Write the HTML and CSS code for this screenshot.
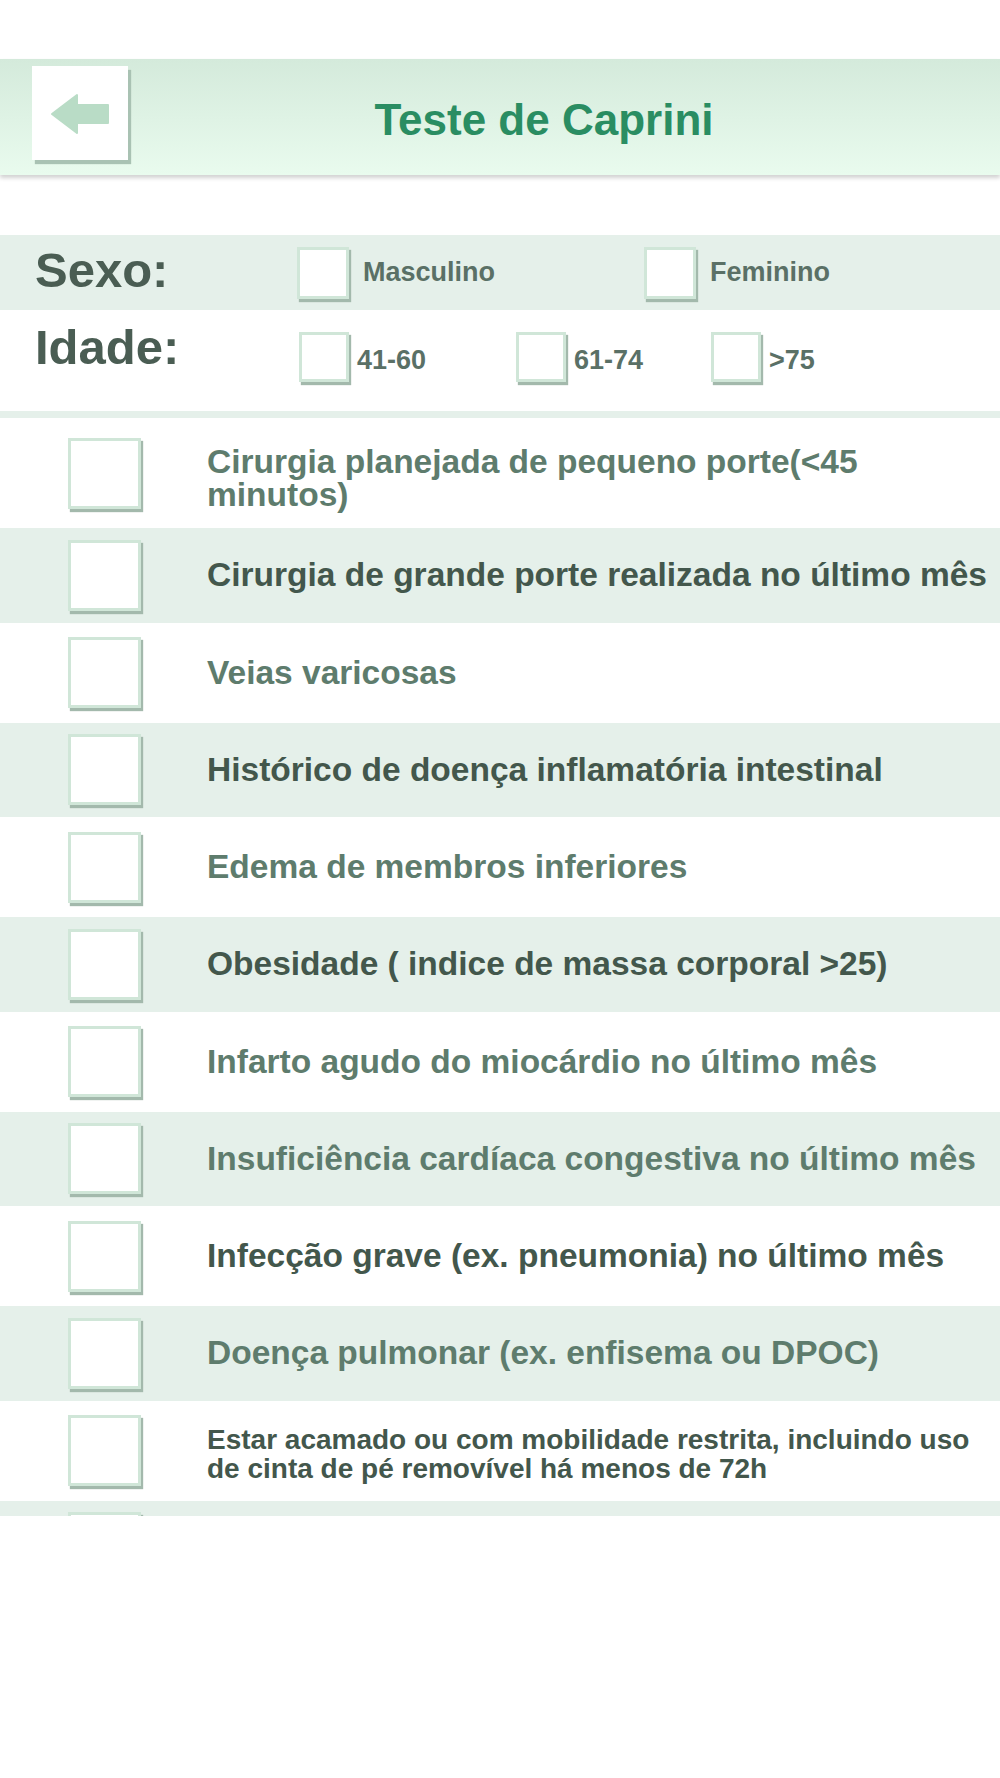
FILE: index.html
```html
<!DOCTYPE html>
<html lang="pt-BR">
<head>
    <meta charset="UTF-8">
    <meta name="viewport" content="width=device-width, initial-scale=1.0">
    <title>Teste de Caprini</title>
    <link rel="stylesheet" href="styles.css">
</head>
<body>
    <header class="topbar">
        <button class="back-btn" type="button">
            <svg width="96" height="94" viewBox="0 0 96 94">
                <path d="M20 48 L45 29 L45 39 L76 39 L76 57 L45 57 L45 67 Z" fill="#b9dcc6" stroke="#b9dcc6" stroke-width="2" stroke-linejoin="round"/>
            </svg>
        </button>
        <h1 class="title">Teste de Caprini</h1>
    </header>

    <section class="patient">
        <div class="field field-sexo">
            <span class="field-label">Sexo:</span>
            <label class="opt opt-sexo"><span class="box"></span>Masculino</label>
            <label class="opt opt-sexo"><span class="box"></span>Feminino</label>
        </div>
        <div class="field field-idade">
            <span class="field-label">Idade:</span>
            <label class="opt opt-age1"><span class="box"></span><span class="opt-text">41-60</span></label>
            <label class="opt opt-age2"><span class="box"></span><span class="opt-text">61-74</span></label>
            <label class="opt"><span class="box"></span><span class="opt-text">&gt;75</span></label>
        </div>
    </section>

    <div class="divider"></div>

    <ul class="risk-list">
        <li class="risk first"><span class="box box-lg"></span><span class="risk-text light">Cirurgia planejada de pequeno porte(&lt;45 minutos)</span></li>
        <li class="risk"><span class="box box-lg"></span><span class="risk-text">Cirurgia de grande porte realizada no último mês</span></li>
        <li class="risk"><span class="box box-lg"></span><span class="risk-text light">Veias varicosas</span></li>
        <li class="risk"><span class="box box-lg"></span><span class="risk-text">Histórico de doença inflamatória intestinal</span></li>
        <li class="risk"><span class="box box-lg"></span><span class="risk-text light">Edema de membros inferiores</span></li>
        <li class="risk"><span class="box box-lg"></span><span class="risk-text">Obesidade ( indice de massa corporal &gt;25)</span></li>
        <li class="risk"><span class="box box-lg"></span><span class="risk-text light">Infarto agudo do miocárdio no último mês</span></li>
        <li class="risk"><span class="box box-lg"></span><span class="risk-text light">Insuficiência cardíaca congestiva no último mês</span></li>
        <li class="risk"><span class="box box-lg"></span><span class="risk-text">Infecção grave (ex. pneumonia) no último mês</span></li>
        <li class="risk"><span class="box box-lg"></span><span class="risk-text light">Doença pulmonar (ex. enfisema ou DPOC)</span></li>
        <li class="risk"><span class="box box-lg"></span><span class="risk-text small">Estar acamado ou com mobilidade restrita, incluindo uso de cinta de pé removível há menos de 72h</span></li>
        <li class="risk"><span class="box box-lg"></span></li>
    </ul>
</body>
</html>
```

FILE: styles.css
```css
:root {
    --shade: #e5f0ea;
    --text-dark: #43574c;
    --text-light: #5e7c6d;
    --label: #4a5d53;
    --title: #2a8d62;
    --box-border: #d0e6d8;
    --box-shadow: #a3b9ac;
}

body {
    margin: 0;
    background: #fff;
    font-family: "Liberation Sans", Arial, sans-serif;
    font-weight: bold;
}

/* header */
.topbar {
    display: flex;
    align-items: flex-start;
    box-sizing: border-box;
    height: 116px;
    margin-top: 59px;
    padding: 7px 40px 0 32px;
    background: linear-gradient(to bottom, #d4eadb, #e9fbee);
    box-shadow: 0 3px 4px rgba(0, 0, 0, 0.18);
}

.back-btn {
    display: flex;
    width: 96px;
    height: 94px;
    padding: 0;
    border: none;
    background: #fff;
    box-shadow: 3px 4px 1px #a9c2b3;
    cursor: pointer;
}

.title {
    flex: 1;
    margin: 32px 0 0;
    font-size: 44px;
    line-height: 44px;
    text-align: center;
    color: var(--title);
}

/* sexo / idade */
.patient {
    margin-top: 60px;
}

.field {
    display: flex;
    box-sizing: border-box;
    padding-left: 35px;
}

.field-sexo {
    height: 75px;
    align-items: center;
    background: var(--shade);
}

.field-idade {
    height: 101px;
    align-items: flex-start;
    padding-top: 13px;
}

.field-label {
    font-size: 49px;
    line-height: 49px;
    color: var(--label);
}

.field-sexo .field-label {
    width: 262px;
    margin-bottom: 4px;
}

.field-idade .field-label {
    width: 264px;
}

.opt {
    display: flex;
    align-items: center;
    font-size: 27px;
    color: #5a7066;
}

.opt-sexo {
    width: 347px;
}

.opt-sexo .box {
    width: 52px;
    height: 52px;
    margin-right: 14px;
}

.field-idade .opt {
    margin-top: 9px;
}

.field-idade .box {
    width: 50px;
    height: 50px;
    margin-right: 8px;
}

.opt-text {
    padding-top: 6px;
}

.opt-age1 {
    width: 217px;
}

.opt-age2 {
    width: 195px;
}

.box {
    display: block;
    flex-shrink: 0;
    box-sizing: border-box;
    background: #fff;
    border: 3px solid var(--box-border);
    box-shadow: 2px 3px 1px var(--box-shadow);
}

.divider {
    height: 7px;
    background: var(--shade);
}

/* risk factors */
.risk-list {
    height: 1098px;
    margin: 0;
    padding: 0;
    list-style: none;
    overflow: hidden;
}

.risk {
    display: flex;
    align-items: center;
    box-sizing: border-box;
    height: 100px;
    padding-left: 68px;
}

.risk:nth-child(even) {
    height: 94.5px;
    background: var(--shade);
}

.risk.first {
    height: 110px;
}

.box-lg {
    width: 73px;
    height: 71px;
    margin-right: 66px;
}

.risk-text {
    flex: 1;
    font-size: 33.5px;
    line-height: 28px;
    color: var(--text-dark);
}

.risk-text.light {
    color: var(--text-light);
}

.first .risk-text {
    line-height: 33px;
    margin-top: 10px;
}

.risk-text.small {
    font-size: 28px;
    line-height: 29px;
    margin-top: 6px;
}
```
